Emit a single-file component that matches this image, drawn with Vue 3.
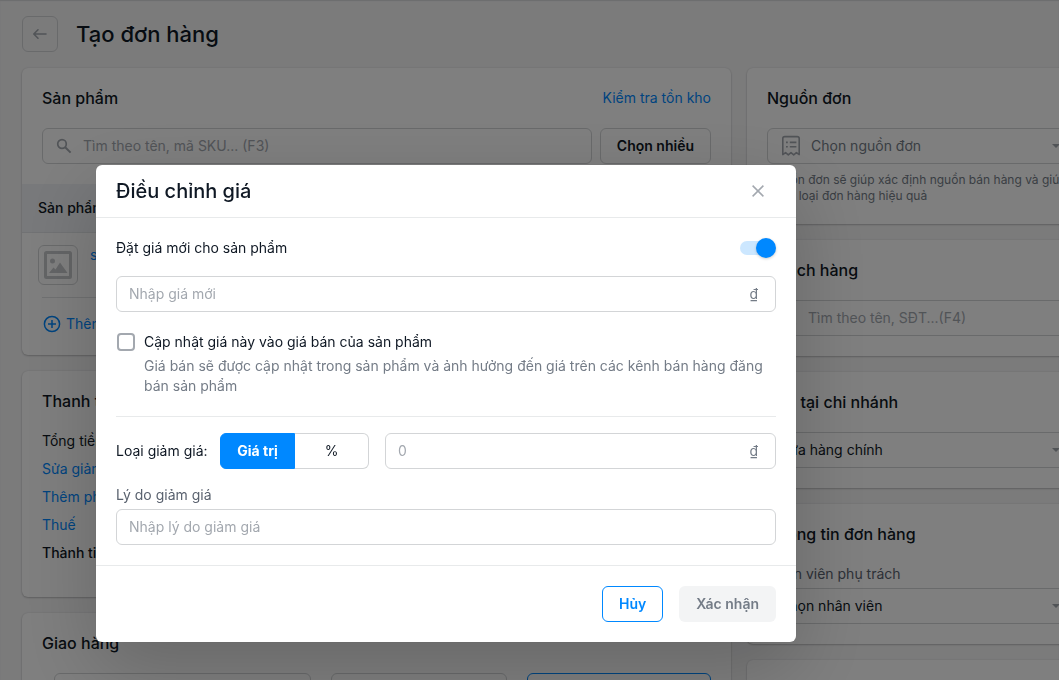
<script setup>
import { ref } from 'vue'

const newPriceOn = ref(true)
const newPrice = ref('')
const updateProduct = ref(false)
const discountType = ref('value')
const discount = ref('')
const reason = ref('')
const paymentRows = [
  { label: 'Tổng tiền hàng', link: false },
  { label: 'Sửa giảm giá', link: true },
  { label: 'Thêm phí giao hàng', link: true },
  { label: 'Thuế', link: true },
  { label: 'Thành tiền', link: false, strong: true }
]
</script>

<template>
  <div class="page">
    <header class="page-head">
      <button type="button" class="back" aria-label="Quay lại">
        <svg width="16" height="16" viewBox="0 0 16 16" fill="none" stroke="currentColor" stroke-width="1.6" stroke-linecap="round" stroke-linejoin="round">
          <path d="M14 8H2M6 3.8L1.8 8L6 12.2" />
        </svg>
      </button>
      <h1>Tạo đơn hàng</h1>
    </header>

    <div class="columns">
      <main class="col">
        <section class="card products">
          <div class="card-head">
            <h2>Sản phẩm</h2>
            <a href="#">Kiểm tra tồn kho</a>
          </div>
          <div class="search-row">
            <div class="field search">
              <svg width="16" height="16" viewBox="0 0 16 16" fill="none" stroke="currentColor" stroke-width="1.7">
                <circle cx="6" cy="6" r="4.3" />
                <path d="M9.2 9.2L14.6 14.6" stroke-width="2" />
              </svg>
              <input type="text" aria-label="Tìm sản phẩm" placeholder="Tìm theo tên, mã SKU... (F3)" />
            </div>
            <button type="button" class="btn plain">Chọn nhiều</button>
          </div>
          <table>
            <thead>
              <tr><th>Sản phẩm</th></tr>
            </thead>
            <tbody>
              <tr>
                <td>
                  <div class="product">
                    <span class="thumb">
                      <svg width="28" height="28" viewBox="0 0 28 28">
                        <rect x="1.5" y="1.5" width="25" height="25" rx="1" fill="none" stroke="#c8cacd" stroke-width="3" />
                        <circle cx="8.5" cy="10" r="2.5" fill="#c8cacd" />
                        <path d="M5 22L9.5 16.5L11.5 18.5L16 11.5L23.5 22Z" fill="#c8cacd" />
                      </svg>
                    </span>
                    <a href="#">sp</a>
                  </div>
                </td>
              </tr>
            </tbody>
          </table>
          <div class="add-row">
            <a href="#">
              <svg width="20" height="20" viewBox="0 0 20 20" fill="none" stroke="currentColor" stroke-width="1.5">
                <circle cx="10" cy="10" r="7.6" />
                <path d="M10 6V14M6 10H14" />
              </svg>
              Thêm dịch vụ
            </a>
          </div>
        </section>

        <section class="card payment">
          <h2>Thanh toán</h2>
          <ul>
            <li v-for="row in paymentRows" :key="row.label" :class="{ strong: row.strong }">
              <a v-if="row.link" href="#">{{ row.label }}</a>
              <span v-else>{{ row.label }}</span>
            </li>
          </ul>
        </section>

        <section class="card shipping">
          <h2>Giao hàng</h2>
          <div class="options">
            <div class="option"></div>
            <div class="option"></div>
            <div class="option active"></div>
          </div>
        </section>
      </main>

      <aside class="col">
        <section class="card">
          <h2>Nguồn đơn</h2>
          <div class="field select">
            <svg class="lead" width="24" height="24" viewBox="0 0 24 24" fill="none" stroke="currentColor" stroke-width="1.6" stroke-linejoin="round">
              <path d="M3.8 20.6V4.6a2 2 0 0 1 2-2h12.4a2 2 0 0 1 2 2V20.6L17.4 18.6L14.7 20.8L12 18.6L9.3 20.8L6.6 18.6Z" />
              <path d="M7 8.4h1.8M10.8 8.4h6.6M7 12.8h1.8M10.8 12.8h6.6" />
            </svg>
            <select class="muted" aria-label="Nguồn đơn"><option>Chọn nguồn đơn</option></select>
            <svg class="caret" width="8" height="4" viewBox="0 0 8 4"><path d="M0 0H8L4 4Z" fill="currentColor" /></svg>
          </div>
          <p class="hint">Nguồn đơn sẽ giúp xác định nguồn bán hàng và giúp phân loại đơn hàng hiệu quả</p>
        </section>

        <section class="card">
          <h2>Khách hàng</h2>
          <div class="field search">
            <svg width="16" height="16" viewBox="0 0 16 16" fill="none" stroke="currentColor" stroke-width="1.7">
              <circle cx="6" cy="6" r="4.3" />
              <path d="M9.2 9.2L14.6 14.6" stroke-width="2" />
            </svg>
            <input type="text" aria-label="Tìm khách hàng" placeholder="Tìm theo tên, SĐT...(F4)" />
          </div>
        </section>

        <section class="card">
          <h2>Bán tại chi nhánh</h2>
          <div class="field select">
            <select aria-label="Chi nhánh"><option>Cửa hàng chính</option></select>
            <svg class="caret" width="8" height="4" viewBox="0 0 8 4"><path d="M0 0H8L4 4Z" fill="currentColor" /></svg>
          </div>
        </section>

        <section class="card">
          <h2>Thông tin đơn hàng</h2>
          <label class="label" for="staff">Nhân viên phụ trách</label>
          <div class="field select">
            <select id="staff"><option>Chọn nhân viên</option></select>
            <svg class="caret" width="8" height="4" viewBox="0 0 8 4"><path d="M0 0H8L4 4Z" fill="currentColor" /></svg>
          </div>
        </section>

        <section class="card last"></section>
      </aside>
    </div>
  </div>

  <div class="overlay">
    <div class="modal" role="dialog" aria-modal="true" aria-labelledby="modal-title">
      <header class="modal-head">
        <h2 id="modal-title">Điều chỉnh giá</h2>
        <button type="button" class="close" aria-label="Đóng">
          <svg width="12" height="12" viewBox="0 0 12 12" fill="none" stroke="currentColor" stroke-width="1.5">
            <path d="M0.6 0.6L11.4 11.4M11.4 0.6L0.6 11.4" />
          </svg>
        </button>
      </header>

      <div class="modal-body">
        <div class="switch-row">
          <label for="new-price-on">Đặt giá mới cho sản phẩm</label>
          <input id="new-price-on" v-model="newPriceOn" type="checkbox" role="switch" class="switch" />
        </div>
        <div class="field price">
          <input v-model="newPrice" type="text" aria-label="Giá mới" placeholder="Nhập giá mới" />
          <span class="unit">₫</span>
        </div>

        <div class="check-row">
          <input id="update-product" v-model="updateProduct" type="checkbox" class="check" />
          <div>
            <label for="update-product">Cập nhật giá này vào giá bán của sản phẩm</label>
            <p>Giá bán sẽ được cập nhật trong sản phẩm và ảnh hưởng đến giá trên các kênh bán hàng đăng bán sản phẩm</p>
          </div>
        </div>

        <div class="discount-row">
          <label for="discount">Loại giảm giá:</label>
          <div class="segment">
            <button type="button" :class="{ on: discountType === 'value' }" @click="discountType = 'value'">Giá trị</button>
            <button type="button" :class="{ on: discountType === 'percent' }" @click="discountType = 'percent'">%</button>
          </div>
          <div class="field">
            <input id="discount" v-model="discount" type="text" placeholder="0" />
            <span class="unit">₫</span>
          </div>
        </div>

        <label class="label" for="reason">Lý do giảm giá</label>
        <div class="field">
          <input id="reason" v-model="reason" type="text" placeholder="Nhập lý do giảm giá" />
        </div>
      </div>

      <footer class="modal-foot">
        <button type="button" class="btn outline">Hủy</button>
        <button type="button" class="btn disabled" disabled>Xác nhận</button>
      </footer>
    </div>
  </div>
</template>

<style>
html,
body {
  margin: 0;
  overflow: hidden;
}
</style>

<style scoped>
.page,
.overlay {
  font-family: Inter, "Noto Sans", sans-serif;
  font-size: 14px;
  line-height: 20px;
  color: #0f1824;
}
.page *,
.overlay * {
  box-sizing: border-box;
}
.page {
  box-sizing: border-box;
  height: 100vh;
  overflow: hidden;
  padding: 16px 0 0 22px;
  background: #f6f6f7;
  box-shadow: inset 0 1px 1px #d9dadb;
}
h1,
h2,
p,
ul {
  margin: 0;
  padding: 0;
}
h1 {
  font-size: 22px;
  line-height: 28px;
  font-weight: 500;
}
h2 {
  font-size: 16px;
  line-height: 20px;
  font-weight: 500;
}
a {
  color: #0088ff;
  text-decoration: none;
}
button,
input,
select {
  font: inherit;
  color: inherit;
  margin: 0;
}
.page-head {
  display: flex;
  align-items: center;
  gap: 18px;
  margin-bottom: 16px;
}
.back {
  display: flex;
  align-items: center;
  justify-content: center;
  width: 36px;
  height: 36px;
  padding: 0;
  border: 1px solid #d3d5d7;
  border-radius: 6px;
  background: none;
  color: #a3a8af;
}
.columns {
  display: grid;
  grid-template-columns: minmax(0, 1fr) 354px;
  gap: 16px;
  align-items: start;
  margin-right: -42px;
}
.col {
  display: flex;
  flex-direction: column;
  gap: 16px;
}
.card {
  padding: 20px;
  border-radius: 6px;
  background: #ffffff;
  box-shadow: 0 0 2px rgba(23, 24, 24, 0.12), 0 1px 2px rgba(0, 0, 0, 0.2);
}
.card > h2 {
  margin-bottom: 20px;
}
.last {
  min-height: 96px;
}
.card-head {
  display: flex;
  justify-content: space-between;
  align-items: center;
  padding: 0 20px;
}
.search-row {
  display: flex;
  gap: 8px;
  padding: 20px;
}
.field {
  display: flex;
  align-items: center;
  flex: 1;
  min-width: 0;
  height: 36px;
  border: 1px solid #d3d5d7;
  border-radius: 6px;
  background: #ffffff;
}
.field input,
.field select {
  flex: 1;
  min-width: 0;
  width: 100%;
  height: 34px;
  padding: 0 12px;
  border: 0;
  outline: 0;
  background: transparent;
  appearance: none;
}
.field input {
  padding-bottom: 2px;
}
.field input::placeholder {
  color: #a3a8af;
  opacity: 1;
}
.search svg {
  flex: none;
  margin-left: 13px;
  color: #a3a8af;
}
.field.search input {
  padding-left: 11px;
}
.field.select select {
  padding: 0 11px;
}
.select .lead {
  flex: none;
  margin-left: 11px;
  color: #a3a8af;
}
.field.select .lead + select {
  padding-left: 8px;
}
.select .caret {
  flex: none;
  margin-right: 20px;
  color: #a3a8af;
}
.select .muted {
  color: #747c87;
}
.hint {
  margin-top: 8px;
  font-size: 12px;
  line-height: 16px;
  color: #747c87;
}
.label {
  display: block;
  margin-bottom: 4px;
  color: #5a626f;
}
.btn {
  height: 36px;
  padding: 0 16px;
  border: 1px solid transparent;
  border-radius: 6px;
  font-weight: 600;
  background: #ffffff;
}
.btn.plain {
  border-color: #d3d5d7;
}
table {
  width: 100%;
  border-collapse: collapse;
}
th {
  height: 48px;
  padding: 0 16px;
  border-bottom: 1px solid #e2e5e8;
  background: #f0f3f6;
  text-align: left;
  font-weight: 500;
}
td {
  padding: 12px 16px;
}
.product {
  display: flex;
  gap: 12px;
}
.thumb {
  display: flex;
  align-items: center;
  justify-content: center;
  width: 40px;
  height: 40px;
  border: 1px solid #d3d5d7;
  border-radius: 6px;
}
.add-row {
  margin: 0 20px;
  padding-top: 16px;
  border-top: 1px solid #e0e2e4;
}
.add-row a {
  display: flex;
  align-items: center;
  gap: 4px;
}
.products {
  padding: 20px 0 21px;
}
.payment {
  padding-bottom: 30px;
}
.payment h2 {
  margin-bottom: 16px;
}
.payment ul {
  list-style: none;
}
.payment li {
  line-height: 28px;
}
.payment .strong {
  font-weight: 500;
}
.options {
  display: grid;
  grid-template-columns: 257fr 176fr 184fr;
  gap: 20px;
  padding-left: 12px;
}
.option {
  height: 60px;
  border: 1px solid #d3d5d7;
  border-radius: 6px;
}
.option.active {
  border-color: #0088ff;
}

.overlay {
  position: fixed;
  inset: 0;
  padding: 165px 96px 0;
  background: rgba(0, 0, 0, 0.5);
}
.modal {
  max-width: 700px;
  border-radius: 6px;
  background: #ffffff;
  box-shadow: 0 26px 80px rgba(0, 0, 0, 0.2), 0 0 1px rgba(0, 0, 0, 0.2);
}
.modal-head {
  display: flex;
  align-items: center;
  justify-content: space-between;
  padding: 12px 20px;
  border-bottom: 1px solid #e8eaeb;
}
.modal-head h2 {
  font-size: 20px;
  line-height: 28px;
}
.close {
  display: flex;
  align-items: center;
  justify-content: center;
  width: 36px;
  height: 28px;
  padding: 0;
  border: 0;
  background: none;
  color: #a3a8af;
}
.modal-body {
  padding: 20px;
}
.switch-row {
  display: flex;
  align-items: center;
  justify-content: space-between;
  margin-bottom: 18px;
}
.switch {
  position: relative;
  width: 36px;
  height: 20px;
  appearance: none;
}
.switch::before {
  content: "";
  position: absolute;
  inset: 3px 2px 3px 0;
  border-radius: 7px;
  background: #e8eaeb;
}
.switch::after {
  content: "";
  position: absolute;
  top: 0;
  left: 0;
  width: 20px;
  height: 20px;
  border-radius: 50%;
  background: #ffffff;
  box-shadow: 0 1px 3px rgba(0, 0, 0, 0.2);
}
.switch:checked::before {
  background: #cce7ff;
}
.switch:checked::after {
  left: 16px;
  background: #0088ff;
}
.unit {
  padding-right: 17px;
  color: #747c87;
}
.check-row {
  display: flex;
  align-items: flex-start;
  gap: 8px;
  margin-top: 20px;
  padding-bottom: 20px;
  border-bottom: 1px solid #e8eaeb;
}
.check-row label {
  display: block;
}
.check-row p {
  margin-top: 4px;
  color: #747c87;
}
.check {
  flex: none;
  width: 18px;
  height: 18px;
  margin: 1px;
  border: 2px solid #a3a8af;
  border-radius: 4px;
  background: #ffffff;
  appearance: none;
}
.check:checked {
  border-color: #0088ff;
  background: #0088ff;
}
.discount-row {
  display: grid;
  grid-template-columns: 88px 149px minmax(0, 1fr);
  align-items: center;
  gap: 16px;
  margin: 16px 0;
  white-space: nowrap;
}
.segment {
  display: flex;
}
.segment button {
  flex: 1;
  height: 36px;
  padding: 0;
  border: 1px solid #d3d5d7;
  background: #ffffff;
}
.segment button:first-child {
  border-radius: 6px 0 0 6px;
}
.segment button:last-child {
  border-left: 0;
  border-radius: 0 6px 6px 0;
}
.segment .on {
  border-color: #0088ff;
  background: #0088ff;
  color: #ffffff;
  font-weight: 700;
}
.modal-foot {
  display: flex;
  justify-content: flex-end;
  gap: 16px;
  padding: 20px;
  border-top: 1px solid #e8eaeb;
}
.btn.outline {
  border-color: #0088ff;
  color: #0088ff;
}
.btn.disabled {
  background: #f3f4f5;
  color: #747c87;
}
</style>
